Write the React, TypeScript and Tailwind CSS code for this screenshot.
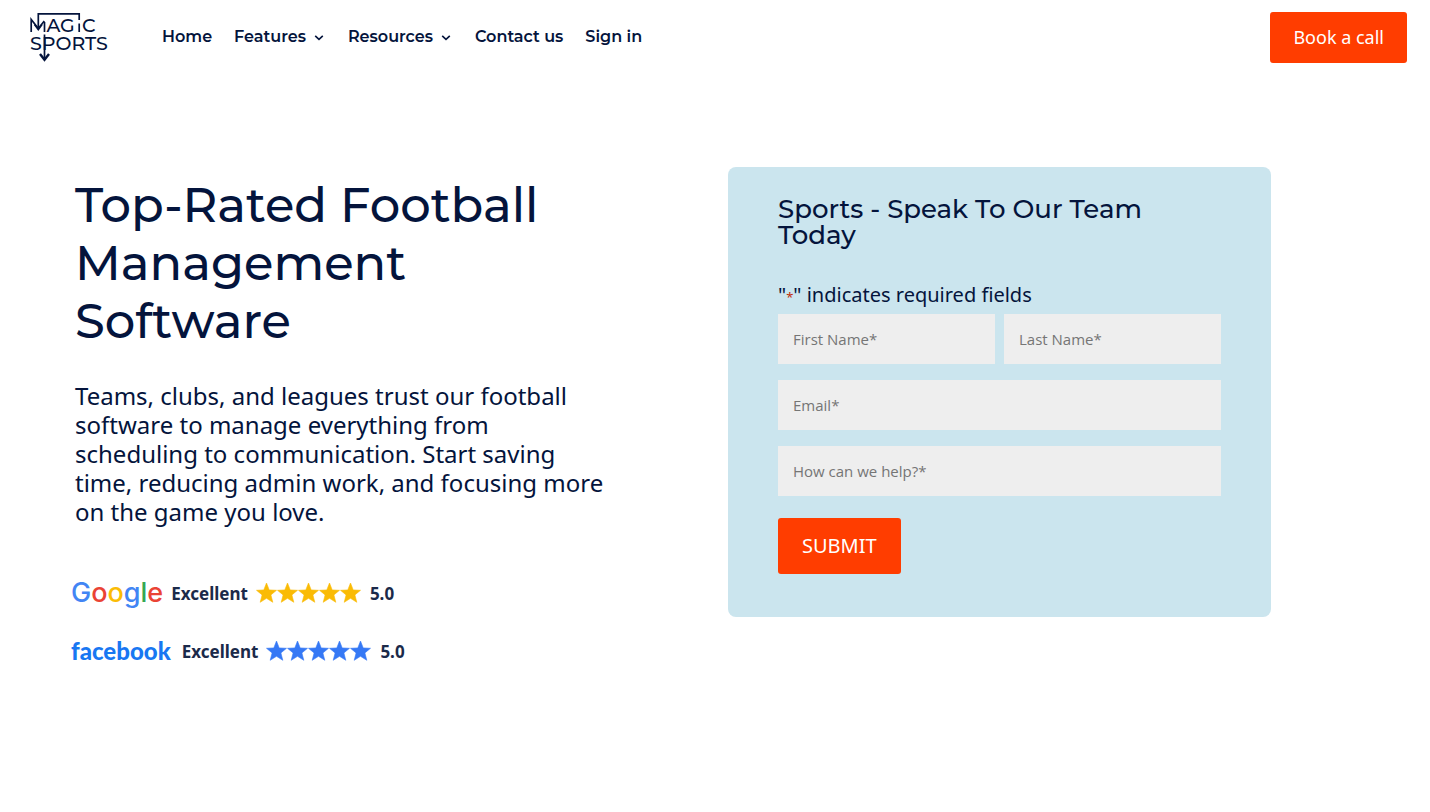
import type { ReactNode } from "react";

const display = "font-['Montserrat','Inter',sans-serif]";

function Logo() {
  return (
    <svg width="82" height="51" viewBox="0 0 82 51" role="img" aria-label="Magic Sports" className="block">
      <g fill="none" stroke="#04143c" strokeWidth="1.7">
        <path d="M2.200 20V7.500L9.300 16.500L15.300 9" />
        <path d="M9.300 16V1.800H50.200V8" />
        <path d="M5.500 12.500L9.300 17.500L13 12.500" />
        <path d="M50.200 11.500V20" />
        <path d="M15.500 10V20M15.500 22.500V46" />
        <path d="M11 42L15.500 47.800L20 42" strokeWidth="2.400" />
      </g>
      <g fill="#04143c" fontFamily="Montserrat, Inter, sans-serif" fontSize="19" fontWeight="500">
        <text x="17.500" y="20">A</text>
        <text x="31" y="20">G</text>
        <text x="53" y="20">C</text>
        <text x="1" y="37.500">SPORTS</text>
      </g>
    </svg>
  );
}

function Chevron() {
  return (
    <svg width="12" height="10" viewBox="0 0 12 10" aria-hidden="true" fill="none" stroke="currentColor" strokeWidth="1.6">
      <path d="M1.200 3.800L5 7.400L8.800 3.800" />
    </svg>
  );
}

function NavLink({ children, menu = false }: { children: ReactNode; menu?: boolean }) {
  return (
    <a href="#" className="flex items-center gap-2">
      {children}
      {menu && <Chevron />}
    </a>
  );
}

function Stars({ className }: { className: string }) {
  return (
    <svg width="105" height="22" viewBox="0 0 105 22" role="img" aria-label="5 out of 5 stars" className={className} fill="currentColor" stroke="currentColor" strokeWidth="0.6">
      {[0, 1, 2, 3, 4].map((i) => (
        <path
          key={i}
          transform={`translate(${i * 21} 0)`}
          d="M10.500 1L13.200 7.900L20.500 8.300L14.900 12.900L16.800 20.300L10.500 16.300L4.200 20.300L6.100 12.900L0.500 8.300L7.800 7.900Z"
        />
      ))}
    </svg>
  );
}

function Rating({ brand, stars }: { brand: ReactNode; stars: string }) {
  return (
    <div className="flex h-8 items-center text-[17px] leading-6 font-bold text-[#1b2a4a]">
      {brand}
      <span className="mr-2 pt-0.5">Excellent</span>
      <Stars className={stars} />
      <span className="ml-[9px] pt-0.5">5.0</span>
    </div>
  );
}

function Field({ id, label, type = "text" }: { id: string; label: string; type?: string }) {
  return (
    <input
      id={id}
      type={type}
      required
      aria-label={label}
      placeholder={`${label}*`}
      className="block h-[50px] w-full min-w-0 bg-[#eeeeee] px-[15px] font-['Open_Sans',sans-serif] text-[15px] text-[#333333] outline-none placeholder:text-[#757575]"
    />
  );
}

export default function App() {
  return (
    <div className="min-h-screen bg-white font-['Noto_Sans',sans-serif] text-[#04143c]">
      <header className="flex items-start justify-between pt-3 pr-[23px] pl-[29px]">
        <div className="flex items-center gap-[51px]">
          <a href="#"><Logo /></a>
          <nav className={`flex items-center gap-[22px] pb-0.5 text-base font-semibold ${display}`}>
            <NavLink>Home</NavLink>
            <NavLink menu>Features</NavLink>
            <NavLink menu>Resources</NavLink>
            <NavLink>Contact us</NavLink>
            <NavLink>Sign in</NavLink>
          </nav>
        </div>
        <a href="#" className="flex h-[51px] items-center rounded-[3px] bg-[#ff3d00] px-[23px] pb-0.5 text-lg text-white">
          Book a call
        </a>
      </header>

      <main className="grid grid-cols-2 items-start gap-[110px] pt-[104px] pr-[159px] pl-[75px]">
        <section className="pt-[9px]">
          <h1 className={`text-[48px] leading-[58px] font-medium ${display}`}>
            Top-Rated Football<br />Management<br />Software
          </h1>
          <p className="mt-[31px] max-w-[534px] text-2xl leading-[29px]">
            Teams, clubs, and leagues trust our football software to manage everything from
            scheduling to communication. Start saving time, reducing admin work, and focusing more
            on the game you love.
          </p>
          <div className="mt-[51px] -ml-1 flex flex-col gap-[26px]">
            <Rating
              stars="text-[#fabb05]"
              brand={
                <span className="mr-2 font-['Inter',sans-serif] text-[27px] leading-8 font-medium">
                  <span className="text-[#4285f4]">G</span>
                  <span className="text-[#ea4335]">o</span>
                  <span className="text-[#fbbc05]">o</span>
                  <span className="text-[#4285f4]">g</span>
                  <span className="text-[#34a853]">l</span>
                  <span className="text-[#ea4335]">e</span>
                </span>
              }
            />
            <Rating
              stars="text-[#3578f5]"
              brand={
                <span className="mr-[11px] font-['Lato',sans-serif] text-2xl leading-8 font-black text-[#1877f2]">facebook</span>
              }
            />
          </div>
        </section>

        <section className="rounded-lg bg-[#cbe5ee] px-[50px] pt-[29px] pb-[43px]">
          <h2 className={`text-[26px] leading-[26px] font-medium ${display}`}>
            Sports - Speak To Our Team<br />Today
          </h2>
          <form className="mt-8" onSubmit={(e) => e.preventDefault()}>
            <p className="text-xl leading-[30px]">
              "<span className="text-[13px] leading-none text-[#c02b0a]">*</span>" indicates required fields
            </p>
            <div className="mt-1 flex flex-col gap-4">
              <div className="flex gap-[9px]">
                <Field id="first-name" label="First Name" />
                <Field id="last-name" label="Last Name" />
              </div>
              <Field id="email" label="Email" type="email" />
              <Field id="help" label="How can we help?" />
            </div>
            <button type="submit" className="mt-[22px] block h-14 rounded-[3px] bg-[#ff3d00] px-6 text-xl text-white">
              SUBMIT
            </button>
          </form>
        </section>
      </main>
    </div>
  );
}
